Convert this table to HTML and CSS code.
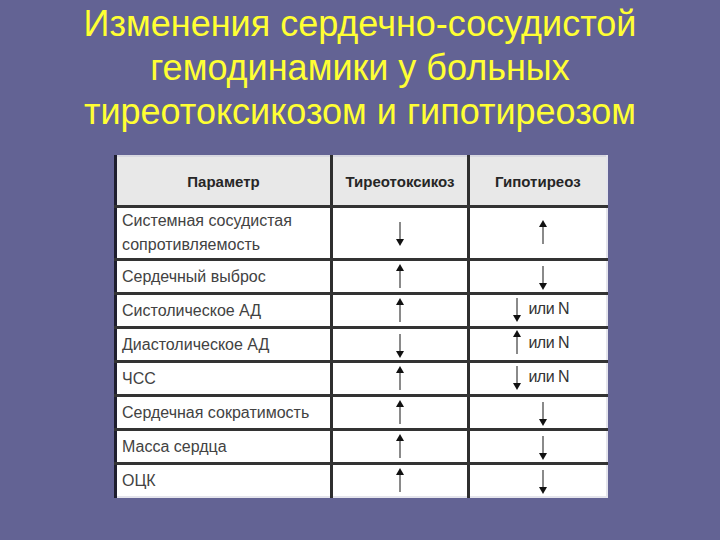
FILE: index.html
```html
<!DOCTYPE html>
<html lang="ru">
<head>
<meta charset="utf-8">
<link rel="stylesheet" href="styles.css">
</head>
<body>
<div class="slide">
  <h1 class="title">Изменения сердечно-сосудистой<br>гемодинамики у больных<br>тиреотоксикозом и гипотиреозом</h1>
  <table class="grid">
    <colgroup><col class="c1"><col class="c2"><col class="c3"></colgroup>
    <thead>
      <tr class="head"><th>Параметр</th><th>Тиреотоксикоз</th><th>Гипотиреоз</th></tr>
    </thead>
    <tbody>
      <tr class="tall"><td class="name">Системная сосудистая<br>сопротивляемость</td><td><span class="arr down"></span></td><td class="hy"><span class="arr up"></span></td></tr>
      <tr><td class="name">Сердечный выброс</td><td><span class="arr up"></span></td><td class="hy"><span class="arr down"></span></td></tr>
      <tr><td class="name">Систолическое АД</td><td><span class="arr up"></span></td><td><span class="pair"><span class="arr down"></span><span class="or">или N</span></span></td></tr>
      <tr><td class="name">Диастолическое АД</td><td><span class="arr down"></span></td><td><span class="pair"><span class="arr up"></span><span class="or">или N</span></span></td></tr>
      <tr><td class="name">ЧСС</td><td><span class="arr up"></span></td><td><span class="pair"><span class="arr down"></span><span class="or">или N</span></span></td></tr>
      <tr><td class="name">Сердечная сократимость</td><td><span class="arr up"></span></td><td class="hy"><span class="arr down"></span></td></tr>
      <tr><td class="name">Масса сердца</td><td><span class="arr up"></span></td><td class="hy"><span class="arr down"></span></td></tr>
      <tr><td class="name">ОЦК</td><td><span class="arr up"></span></td><td class="hy"><span class="arr down"></span></td></tr>
    </tbody>
  </table>
</div>
</body>
</html>
```
FILE: styles.css
```css
html, body {
  margin: 0;
  padding: 0;
  background: #636394;
}
.slide {
  width: 720px;
  height: 540px;
  background: #636394;
  display: flex;
  flex-direction: column;
  align-items: center;
  font-family: "Liberation Sans", Arial, sans-serif;
}
.title {
  margin: 2px 0 0 0;
  font-weight: normal;
  font-size: 36px;
  line-height: 44px;
  color: #ffff33;
  text-align: center;
}
.grid {
  margin: 21px 0 0 114px;
  align-self: flex-start;
  border-collapse: collapse;
  background: #ffffff;
  border-left: 3px solid #1e1e2e;
  border-top: 2px solid #d8d8e0;
  border-right: 2px solid #e4e4ec;
  border-bottom: 2px solid #e4e4ec;
}
.c1 { width: 216px; }
.c2 { width: 137px; }
.c3 { width: 138px; }
.grid th, .grid td {
  padding: 0;
  border-left: 3px solid #2e2e2e;
  border-bottom: 3px solid #333333;
}
.grid th:first-child, .grid td:first-child {
  border-left: none;
}
.grid tr:last-child td {
  border-bottom: none;
}
.head th {
  height: 48px;
  background: #e8e8e8;
  font-family: "Liberation Sans Narrow", "Liberation Sans", Arial, sans-serif;
  font-stretch: condensed;
  font-weight: bold;
  font-size: 15px;
  color: #262626;
  text-align: center;
  vertical-align: middle;
}
.grid td {
  height: 31px;
  text-align: center;
  vertical-align: middle;
}
.grid td.hy {
  padding-left: 10px;
}
.grid tr.tall td {
  height: 50px;
}
.grid td.name {
  text-align: left;
  padding-left: 5px;
  font-size: 16px;
  line-height: 24px;
  color: #424242;
}
.arr {
  display: inline-block;
  width: 10px;
  height: 26px;
  position: relative;
  vertical-align: middle;
}
.arr::before {
  content: "";
  position: absolute;
  left: 4px;
  top: 2px;
  bottom: 2px;
  width: 2px;
  background: #8a8a8a;
}
.arr::after {
  content: "";
  position: absolute;
  left: 1px;
  width: 0;
  height: 0;
  border-left: 4px solid transparent;
  border-right: 4px solid transparent;
}
.arr.up::after {
  top: 0;
  border-bottom: 7px solid #111111;
}
.arr.down::after {
  bottom: 0;
  border-top: 7px solid #111111;
}
.pair {
  display: inline-flex;
  align-items: center;
  gap: 6px;
  margin-left: 6px;
}
.or {
  font-size: 16px;
  letter-spacing: -0.5px;
  color: #333333;
}
```
